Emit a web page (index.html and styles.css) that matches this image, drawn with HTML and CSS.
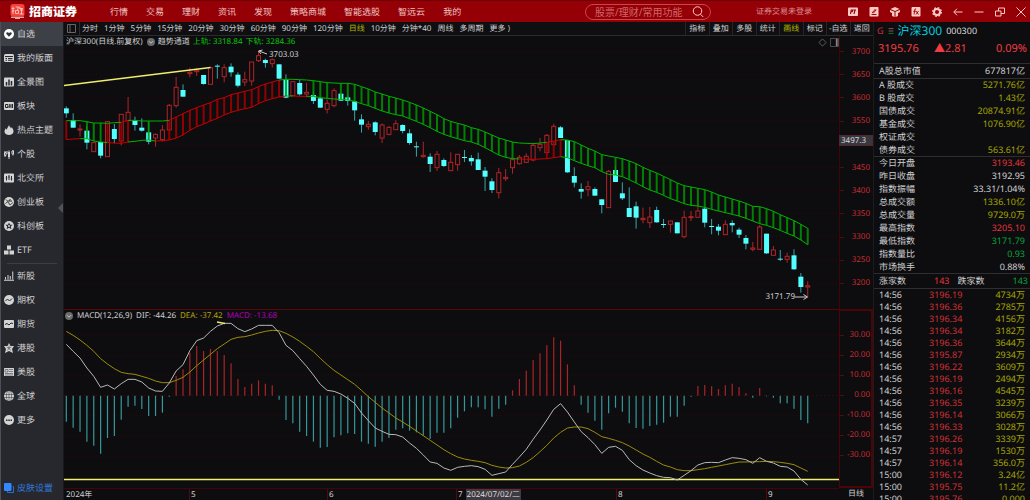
FILE: index.html
```
<!DOCTYPE html>
<html lang="zh-CN">
<head>
<meta charset="utf-8">
<title>招商证券 - 沪深300</title>
<link rel="stylesheet" href="styles.css">
</head>
<body>
<header class="topbar">
  <a class="brand" href="#">
    <svg class="brand-mark" viewBox="0 0 30 30" aria-hidden="true">
      <rect x="1" y="0" width="28" height="25" rx="5" fill="#f4413a"/>
      <path d="M6 5v15M3.500 9h5M3.500 15l5-2M11 6h6l-2 6M11 13h6v6h-6zM20 5l-1 4h7M20 12h6M23 9v11M19 20h8" stroke="#ffe4e0" stroke-width="1.500" fill="none"/>
      <path d="M2 26.500h26" stroke="#ffd8d3" stroke-width="2"/>
      <path d="M10 29h10" stroke="#ffd8d3" stroke-width="1.500"/>
    </svg>
    <span class="brand-name">招商证券</span>
  </a>
  <nav class="menu">
    <a href="#">行情</a><a href="#">交易</a><a href="#">理财</a><a href="#">资讯</a><a href="#">发现</a><a href="#">策略商城</a><a href="#">智能选股</a><a href="#">智远云</a><a href="#">我的</a>
  </nav>
  <form class="search">
    <input type="text" placeholder="股票/理财/常用功能" aria-label="搜索">
    <button type="button" aria-label="搜索按钮">
      <svg viewBox="0 0 24 24"><circle cx="11" cy="10" r="8.500"/><path d="M17 16.500l5.500 5.500"/></svg>
    </button>
  </form>
  <button class="login" type="button">证券交易未登录</button>
  <div class="tools">
    <button type="button" aria-label="行情中心"><svg viewBox="0 0 20 20"><rect x="0" y="1" width="20" height="17" rx="2" fill="#ffc9c4"/><path d="M5 14l1.500-8h3l-1 3.500H6M11 6h5M14 6l-2 8" stroke="#950006" stroke-width="2.200" fill="none"/></svg></button>
    <button type="button" aria-label="画笔"><svg viewBox="0 0 20 20"><rect x="1" y="0" width="18" height="19" rx="2" fill="#ffc9c4"/><path d="M5 15h10M6 12l7-8M8.500 12.500l6-7" stroke="#950006" stroke-width="1.900" fill="none"/></svg></button>
    <button type="button" aria-label="换肤"><svg viewBox="0 0 20 20"><path d="M10 0l9 4-9 4-9-4zM0 6l9 3.500V20l-5-2v-6L0 10zM20 6l-9 3.500V20l5-2v-6l4-2z" fill="#ffc9c4"/></svg></button>
    <button type="button" aria-label="公式"><svg viewBox="0 0 20 20"><rect x="1" y="0" width="18" height="19" rx="2" fill="#ffc9c4"/><path d="M10 4H8L6 15M4.500 8.500h5M10 8l5 7M15 8l-5 7" stroke="#950006" stroke-width="1.800" fill="none"/></svg></button>
    <button type="button" aria-label="设置"><svg viewBox="0 0 20 20"><circle cx="10" cy="10" r="6" fill="none" stroke="#ffc9c4" stroke-width="4"/><circle cx="10" cy="10" r="8.700" fill="none" stroke="#ffc9c4" stroke-width="2.500" stroke-dasharray="3.600 3.230"/></svg></button>
    <button type="button" aria-label="后退"><svg viewBox="0 0 20 20"><path d="M19 10H2M8 3.500L1.500 10 8 16.500" stroke="#ffc9c4" stroke-width="2" fill="none"/></svg></button>
    <button type="button" aria-label="最小化"><svg viewBox="0 0 20 20"><path d="M1 10h18" stroke="#ffc9c4" stroke-width="2"/></svg></button>
    <button type="button" aria-label="还原"><svg viewBox="0 0 20 20"><path d="M1 8h11v10H1zM7 8V2h12v11h-7" stroke="#ffc9c4" stroke-width="2" fill="none"/></svg></button>
    <button type="button" aria-label="关闭"><svg viewBox="0 0 20 20"><path d="M1 1l18 18M19 1L1 19" stroke="#ffc9c4" stroke-width="2"/></svg></button>
  </div>
</header>

<div class="workspace">
  <aside class="sidebar">
    <nav class="side-nav">
      <a class="active" href="#"><svg viewBox="0 0 20 20"><circle cx="10" cy="10" r="10" fill="#fff"/><path d="M10 15.500L4.800 10C3.500 7.500 6.500 5 10 8c3.500-3 6.500-.500 5.200 2z" fill="#33363d"/></svg>自选</a>
      <a href="#"><svg viewBox="0 0 20 20"><rect x="0" y="2" width="20" height="16" rx="3"/><path class="cut" d="M2 7h16M3 11h3M8 11h9M3 14.500h3M8 14.500h9"/></svg>我的版面</a>
      <a href="#"><svg viewBox="0 0 20 20"><rect x="0" y="1" width="20" height="18" rx="2"/><path class="cut wide" d="M5 17v-7M10 17V5M15 17V8"/></svg>全景图</a>
      <a href="#"><svg viewBox="0 0 20 20"><rect x="0" y="2" width="20" height="16" rx="2"/><path class="cut" d="M8 7H3v6h5v-3H6M10.500 6v8M14 6v8M10.500 10h3M17 6v8"/></svg>板块</a>
      <a href="#"><svg viewBox="0 0 20 20"><path d="M10 0c1 4 3 4 4 7 1-1 1-2 1-3 3 3 4 6 4 9 0 4-4 7-9 7s-9-3-9-7c0-3 2-5 3-7 0 2 1 3 2 3 0-4 3-5 4-9z"/></svg>热点主题</a>
      <a href="#"><svg viewBox="0 0 20 20"><path class="line" d="M2 4v3M2 13v3M1 7h3v6H1zM18 2v2M18 10v3M16 4h3v6h-3zM6 4v6"/><rect x="8" y="6" width="4" height="10"/><path class="line" d="M10 3v17"/></svg>个股</a>
      <a href="#"><svg viewBox="0 0 20 20"><rect x="0" y="1" width="20" height="18" rx="2"/><path class="cut" d="M5 6v9M10 4v10M15 6v9M3.500 10h3M8.500 8h3M13.500 12h3"/></svg>北交所</a>
      <a href="#"><svg viewBox="0 0 20 20"><circle cx="10" cy="10" r="10"/><path class="cut" d="M4 5l4 4 5-5M3 13c4-4 6-4 7 0s4 3 7-2M10 8h6"/></svg>创业板</a>
      <a href="#"><svg viewBox="0 0 20 20"><circle cx="10" cy="10" r="10"/><path d="M10 3l2 4.500h5l-3.500 3.500 1.500 5.500-5-3-5 3L6.500 11 3 7.500h5z" fill="#27282d"/><circle cx="10" cy="10" r="2"/></svg>科创板</a>
      <a href="#"><svg viewBox="0 0 20 20"><path d="M6 1h8v8H6zM0 11h9v8H0zM11 11h9v8h-9z"/></svg>ETF</a>
      <hr>
      <a href="#"><svg viewBox="0 0 20 20"><path class="line" d="M0 18.500h20M3 17v-5M8 17V8M12.500 17v-7M17.500 17V1"/></svg>新股</a>
      <a href="#"><svg viewBox="0 0 20 20"><circle cx="10" cy="10" r="10"/><path class="cut" d="M3 12l4-4 4 4 5-5"/></svg>期权</a>
      <a href="#"><svg viewBox="0 0 20 20"><rect x="0" y="2" width="20" height="16" rx="2"/><path class="cut" d="M2 11l4-2 4 3 4-4 4 1"/></svg>期货</a>
      <a href="#"><svg viewBox="0 0 20 20"><path d="M10 0l3 6 7 0-4 6 2 8-8-4-8 4 2-8-4-6h7z"/><path class="cut thin" d="M10 10V5M10 10l5-2M10 10l3 5M10 10l-3 5M10 10L5 8"/></svg>港股</a>
      <a href="#"><svg viewBox="0 0 20 20"><rect x="0" y="2" width="20" height="16" rx="1"/><path class="cut thin" d="M2 5h6v5H2zM10 5h8M10 9h8M2 13h16M2 16h16"/></svg>美股</a>
      <a href="#"><svg viewBox="0 0 20 20"><circle cx="10" cy="10" r="10"/><path class="cut thin" d="M0 7h20M0 13h20M10 0v20M7 0c-3 6-3 14 0 20M13 0c3 6 3 14 0 20"/></svg>全球</a>
      <a href="#"><svg viewBox="0 0 20 20"><circle cx="10" cy="10" r="10"/><path d="M4 9h3v3H4zM8.500 9h3v3h-3zM13 9h3v3h-3z" fill="#27282d"/></svg>更多</a>
    </nav>
    <button class="skin" type="button"><svg viewBox="0 0 20 20"><path d="M17 7h2v12H7v-3" fill="none" stroke="#2b6dcb" stroke-width="2"/><rect x="0" y="0" width="15" height="16" rx="2" fill="#3388ff"/></svg>皮肤设置</button>
    <button class="collapse" type="button" aria-label="收起侧栏"></button>
  </aside>

  <main class="chart">
    <div class="toolbar">
      <button class="panel-toggle" type="button" aria-label="切换面板"><svg viewBox="0 0 9 9"><path d="M.500 .500h8v8h-8zM3 .500v8" fill="none" stroke="#666"/></svg></button>
      <div class="periods">
        <button type="button">分时</button><button type="button">1分钟</button><button type="button">5分钟</button><button type="button">15分钟</button><button type="button">20分钟</button><button type="button">30分钟</button><button type="button">60分钟</button><button type="button">90分钟</button><button type="button">120分钟</button><button type="button" class="on">日线</button><button type="button">10分钟</button><button type="button">分钟*40</button><button type="button">周线</button><button type="button">多周期</button><button type="button">更多 &#10217;</button>
      </div>
      <div class="actions">
        <button type="button">指标</button><button type="button">叠加</button><button type="button">多股</button><button type="button">统计</button><button type="button" class="on">画线</button><button type="button">标记</button><button type="button">-自选</button><button type="button">返回</button>
      </div>
    </div>

    <div class="legend price-legend">
      <span>沪深300(日线.前复权)</span>
      <svg class="drop" viewBox="0 0 10 10"><circle cx="5" cy="5" r="5" fill="#6b6b6b"/><path d="M2.500 4L5 6.500 7.500 4" fill="none" stroke="#ddd"/></svg>
      <span>趋势通道</span>
      <span class="up-rail">上轨: 3318.84</span>
      <span class="up-rail">下轨: 3284.36</span>
      <span class="pane-icons">
        <svg viewBox="0 0 10 10"><path d="M5 1l4 4-4 4-4-4z" fill="none" stroke="#666"/></svg>
        <svg viewBox="0 0 10 10"><path d="M.500 .500h9v9h-9z" fill="none" stroke="#555"/><path d="M7.500 1v8" stroke="#888" stroke-width="2"/></svg>
      </span>
    </div>
    <div class="price-plot">
      <svg id="price" viewBox="64 48 775 261" preserveAspectRatio="none"></svg>
      <span class="tag high">3703.03</span>
      <span class="tag low">3171.79</span>
    </div>
    <div class="axis price-axis">
      <span>3700</span><span>3650</span><span>3600</span><span>3550</span><span>3500</span><span>3450</span><span>3400</span><span>3350</span><span>3300</span><span>3250</span><span>3200</span>
      <b class="cursor-price">3497.3</b>
    </div>

    <div class="legend macd-legend">
      <svg class="drop" viewBox="0 0 10 10"><circle cx="5" cy="5" r="5" fill="#6b6b6b"/><path d="M2.500 4L5 6.500 7.500 4" fill="none" stroke="#ddd"/></svg>
      <span>MACD(12,26,9)</span>
      <span>DIF: -44.26</span>
      <span class="dea">DEA: -37.42</span>
      <span class="macd">MACD: -13.68</span>
    </div>
    <div class="macd-plot">
      <svg id="macd" viewBox="64 321 775 167" preserveAspectRatio="none"></svg>
    </div>
    <div class="axis macd-axis">
      <span>30.00</span><span>20.00</span><span>10.00</span><span>0.00</span><span>-10.00</span><span>-20.00</span><span>-30.00</span>
    </div>

    <div class="time-axis">
      <span>2024年</span><span>5</span><span>6</span><span>7<b>2024/07/02/二</b></span><span>8</span><span>9</span>
    </div>
    <button class="period-label" type="button">日线</button>
  </main>

  <section class="quote">
    <div class="quote-head">
      <div class="name-row"><span class="flag">G</span><svg viewBox="0 0 10 12"><path d="M1 2h8M1 6h8" stroke="#8a6060" stroke-width="1.500"/><path d="M1 10h8" stroke="#0a8a20" stroke-width="1.500"/></svg><strong>沪深300</strong><span>000300</span></div>
      <div class="price-row"><span>3195.76</span><span>▲2.81</span><span>0.09%</span></div>
    </div>
    <table class="stats one"><tr><th scope="row">A股总市值</th><td>677817亿</td></tr></table>
    <table class="stats six">
      <tr><th scope="row">A 股成交</th><td class="y">5271.76亿</td></tr>
      <tr><th scope="row">B 股成交</th><td class="y">1.43亿</td></tr>
      <tr><th scope="row">国债成交</th><td class="y">20874.91亿</td></tr>
      <tr><th scope="row">基金成交</th><td class="y">1076.90亿</td></tr>
      <tr><th scope="row">权证成交</th><td></td></tr>
      <tr><th scope="row">债券成交</th><td class="y">563.61亿</td></tr>
    </table>
    <table class="stats nine">
      <tr><th scope="row">今日开盘</th><td class="r">3193.46</td></tr>
      <tr><th scope="row">昨日收盘</th><td>3192.95</td></tr>
      <tr><th scope="row">指数振幅</th><td>33.31/1.04%</td></tr>
      <tr><th scope="row">总成交额</th><td class="y">1336.10亿</td></tr>
      <tr><th scope="row">总成交量</th><td class="y">9729.0万</td></tr>
      <tr><th scope="row">最高指数</th><td class="r">3205.10</td></tr>
      <tr><th scope="row">最低指数</th><td class="g">3171.79</td></tr>
      <tr><th scope="row">指数量比</th><td class="g">0.93</td></tr>
      <tr><th scope="row">市场换手</th><td>0.88%</td></tr>
    </table>
    <div class="breadth">
      <div><span>涨家数</span><span class="r">143</span></div>
      <div><span>跌家数</span><span class="g">143</span></div>
    </div>
    <div class="trades">
    <table>
      <tr><td>14:56</td><td>3196.19</td><td>4734万</td></tr>
      <tr><td>14:56</td><td>3196.36</td><td>2785万</td></tr>
      <tr><td>14:56</td><td>3196.34</td><td>4156万</td></tr>
      <tr><td>14:56</td><td>3196.34</td><td>3182万</td></tr>
      <tr><td>14:56</td><td>3196.36</td><td>3644万</td></tr>
      <tr><td>14:56</td><td>3195.87</td><td>2934万</td></tr>
      <tr><td>14:56</td><td>3196.22</td><td>3609万</td></tr>
      <tr><td>14:56</td><td>3196.19</td><td>2494万</td></tr>
      <tr><td>14:56</td><td>3196.16</td><td>4545万</td></tr>
      <tr><td>14:56</td><td>3196.35</td><td>3239万</td></tr>
      <tr><td>14:56</td><td>3196.14</td><td>3066万</td></tr>
      <tr><td>14:56</td><td>3196.33</td><td>3028万</td></tr>
      <tr><td>14:57</td><td>3196.26</td><td>3339万</td></tr>
      <tr><td>14:57</td><td>3196.19</td><td>1530万</td></tr>
      <tr><td>14:57</td><td>3196.14</td><td>356.0万</td></tr>
      <tr><td>15:00</td><td>3196.12</td><td>3.24亿</td></tr>
      <tr><td>15:00</td><td>3195.75</td><td>11.2亿</td></tr>
      <tr><td>15:00</td><td>3195.76</td><td>0.000</td></tr>
    </table>
    </div>
  </section>
</div>
<script src="chart.js"></script>
</body>
</html>
```
FILE: styles.css
```
* { box-sizing: border-box; }

body {
  margin: 0;
  height: 100vh;
  display: flex;
  flex-direction: column;
  overflow: hidden;
  background: #0d0d10;
  color: #d0d0d0;
  font: 9px/12px "Noto Sans", "Noto Sans CJK SC", sans-serif;
  text-rendering: geometricPrecision;
}

a { color: inherit; text-decoration: none; }
button {
  margin: 0;
  padding: 0;
  border: 0;
  background: none;
  color: inherit;
  font: inherit;
  text-rendering: inherit;
  white-space: nowrap;
}
svg { display: block; }
table { border-collapse: collapse; width: 100%; }
th, td { padding: 0; font-weight: 400; }

.r { color: #e23438; }
.g { color: #08a038; }
.y { color: #a5a500; }

/* top bar */
.topbar {
  flex: none;
  height: 22px;
  display: flex;
  align-items: center;
  padding: 0 4px 0 10px;
  background: #950006;
  border-top: 1px solid #6d0004;
  color: #f0c4c0;
}
.brand { display: flex; align-items: center; gap: 4px; width: 100px; }
.brand-mark { width: 15px; height: 15px; }
.brand-name { color: #fff; font-size: 12px; font-weight: 900; white-space: nowrap; }
.menu { display: flex; gap: 18px; white-space: nowrap; }
.search {
  display: flex;
  align-items: center;
  width: 126px;
  height: 16px;
  margin-left: auto;
  padding: 0 6px 0 9px;
  border: 1px solid #c9474a;
  border-radius: 8px;
}
.search input {
  flex: 1;
  min-width: 0;
  padding: 0;
  border: 0;
  outline: 0;
  background: none;
  color: #fff;
  font: inherit;
  font-size: 10px;
}
.search input::placeholder { color: #d0666a; opacity: 1; }
.search svg { width: 12px; height: 12px; fill: none; stroke: #ffc9c4; stroke-width: 2; }
.login { margin-left: 45px; font-size: 8px; color: #dc8f8f; }
.tools { display: flex; gap: 11px; margin-left: 36px; }
.tools svg { width: 10px; height: 10px; }

.workspace {
  flex: 1;
  min-height: 0;
  display: grid;
  grid-template-columns: 64px minmax(0, 1fr) 157px;
}

/* sidebar */
.sidebar {
  position: relative;
  display: flex;
  flex-direction: column;
  justify-content: space-between;
  background: #27282d;
  border-left: 1px solid #4c5054;
  border-right: 1px solid #1a1a1e;
}
.side-nav a, .skin { display: flex; align-items: center; gap: 3px; height: 24px; padding-left: 3px; }
.side-nav a.active { background: #3d4047; }
.side-nav svg { width: 10px; height: 10px; fill: #d4d4d4; }
.side-nav .cut { fill: none; stroke: #27282d; stroke-width: 2; }
.side-nav .thin { stroke-width: 1; }
.side-nav .wide { stroke-width: 3; }
.side-nav .line { fill: none; stroke: #d4d4d4; stroke-width: 2; }
.side-nav hr { height: 1px; margin: 1px 6px 0; border: 0; background: #3d3e43; }
.skin { color: #3078dc; }
.skin svg { width: 10px; height: 10px; }
.collapse {
  position: absolute;
  right: 0;
  top: 181px;
  border: solid transparent;
  border-width: 5px 5px 5px 0;
  border-right-color: #505258;
}

/* chart */
.chart {
  display: grid;
  min-height: 0;
  grid-template-columns: minmax(0, 1fr) 34px;
  grid-template-rows: 14px 12px minmax(0, 261fr) 12px minmax(0, 167fr) 12px;
  font-size: 8px;
}
.toolbar {
  grid-column: 1 / -1;
  display: flex;
  align-items: stretch;
  border-bottom: 1px solid #2b2b2e;
  background: #0f0f12;
}
.panel-toggle { width: 16px; padding-left: 3px; border-right: 1px solid #2b2b2e; }
.panel-toggle svg { width: 9px; height: 9px; }
.periods { display: flex; gap: 6px; margin-left: 2px; flex: 1; min-width: 0; overflow: hidden; }
.actions { display: grid; grid-template-columns: repeat(8, 1fr); width: 188px; }
.actions button { border-left: 1px solid #26262a; }
.toolbar .on { color: #b5b500; }

.legend { display: flex; align-items: center; gap: 4px; white-space: nowrap; min-width: 0; }
.price-legend { grid-column: 1; padding-left: 2px; gap: 3px; }
.drop { width: 8px; height: 8px; margin-left: 1px; }
.up-rail { color: #08c408; }
.pane-icons { display: flex; gap: 3px; margin-left: auto; }
.pane-icons svg { width: 9px; height: 9px; }

.price-plot, .macd-plot { position: relative; grid-column: 1; min-height: 0; }
.price-plot > svg, .macd-plot > svg { width: 100%; height: 100%; }
.tag { position: absolute; line-height: 10px; }
.tag.high { left: 205px; top: 2px; }
.tag.low { right: 44px; bottom: 7px; }

.axis { position: relative; display: flex; flex-direction: column; color: #c42c30; }
.axis span {
  flex: 1;
  display: flex;
  align-items: center;
  justify-content: space-between;
}
.axis span::before { content: ""; width: 4px; height: 1px; background: #5d0508; }
.price-axis {
  grid-column: 2;
  grid-row: 2 / 4;
  padding: 4px 3px 14px 0;
  border-left: 1px solid #3f0508;
}
.cursor-price {
  position: absolute;
  left: -1px;
  right: 0;
  top: 99px;
  padding-left: 1px;
  border: 1px solid #55262b;
  background: #38363f;
  color: #d8d8d8;
  font-weight: 400;
  line-height: 9px;
}
.macd-legend { grid-column: 1; border-top: 1px solid #5a0608; }
.dea { color: #b5a50a; }
.macd { color: #b000b8; }
.macd-axis {
  grid-column: 2;
  grid-row: 4 / 6;
  padding: 14px 1px 21px 0;
  border: 2px solid #4c0407;
  border-left-width: 1px;
}
.time-axis {
  display: grid;
  grid-template-columns: 125fr 138fr 129fr 160fr 150fr 73fr;
  border-top: 1px solid #3f0508;
  line-height: 11px;
  white-space: nowrap;
}
.time-axis span { padding-left: 1px; border-left: 1px solid #5a0608; }
.time-axis span:first-child { border-left-color: transparent; }
.time-axis b { display: inline-block; margin-left: 3px; padding: 0 1px; background: #3d3a42; font-weight: 400; color: #ddd; }
.period-label { line-height: 12px; }

/* quote panel */
.quote {
  display: flex;
  flex-direction: column;
  min-height: 0;
  overflow: hidden;
  border-left: 1px solid #1c1c20;
}
.quote-head { padding: 0 3px 5px; color: #f03c40; font-size: 11px; }
.name-row { display: flex; align-items: center; gap: 4px; height: 18px; }
.name-row svg { width: 6px; height: 8px; }
.name-row strong { color: #00c8d8; font-size: 12px; font-weight: 400; }
.name-row span { color: #d8d8d8; font-size: 9px; }
.name-row .flag { color: #c83034; }
.price-row {
  display: grid;
  grid-template-columns: 56px 1fr auto;
  height: 18px;
  line-height: 18px;
  padding-left: 1px;
}
.stats, .breadth { border-top: 1px solid #2e2e31; }
.stats th { text-align: left; padding-left: 5px; }
.stats td { text-align: right; padding-right: 5px; }
.stats.one { height: 15px; }
.stats.six { height: 78px; }
.stats.nine { height: 117px; }
.breadth {
  display: flex;
  align-items: center;
  gap: 8px;
  height: 16px;
  padding: 0 2px 0 5px;
  border-bottom: 1px solid #2e2e31;
}
.breadth div { display: flex; justify-content: space-between; flex: 1; }
.trades { flex: 1; min-height: 0; overflow: hidden; }
.trades table { table-layout: fixed; }
.trades tr { height: 12px; }
.trades td { padding-left: 5px; }
.trades td:nth-child(2) { padding-left: 3px; color: #cf3034; }
.trades td:nth-child(3) { padding-right: 5px; text-align: right; color: #a5a500; }
```
FILE: chart.js
```
// Vertical positions are kept in thirds of a unit; each run has its own base line.
const run = (base, values) => values.map(v => base + v / 3);
const FIRST = 66.3;
const STEP = 6.865;
const x = i => FIRST + STEP * i;

const RED = '#b02428', CYAN = '#54ffff', GREEN = '#00b400', BAND_RED = '#c80000';

// direction, high, body top, body bottom, low
const candleRuns = [
  [40, `D199,205,220,233 D220,240,263,263 U253,267,268,290 D258,272,308,328 U305,308,335,335 D305,306,347,355
   U243,245,350,350 D252,267,297,310 U223,223,303,316 U171,217,242,242 D230,242,255,272 D235,263,272,275
   D245,277,305,313 U280,283,294,320 U255,270,299,305 U192,196,270,270 U111,142,197,203 D133,150,170,170
   U83,97,101,112 U85,91,95,108 D105,105,132,134 U80,83,133,133 D73,77,80,116 U73,83,110,127 D70,80,97,110
   D97,104,137,142 U95,119,126,138 U66,66,123,137 U33,47,62,66 D56,60,69,83 U55,59,71,83 D73,73,116,116
   D103,119,173,175 U125,125,167,167 D120,129,163,167 U128,157,162,172`],
  [60, `D95,105,123,132 D112,115,143,143 U118,130,148,160 U85,92,137,142 D100,101,122,123 D106,112,123,137
   D123,124,151,182 D163,178,194,218 U183,193,200,209 D184,187,216,226 U190,195,234,249 U198,202,223,226
   U181,191,209,209 D193,195,213,220 D208,220,249,254 D245,259,261,290 U245,286,290,293 D280,290,312,336
   U273,283,323,333 D295,300,318,321 U277,307,332,332 U283,283,314,332 D270,291,293,306 D285,294,304,317
   D278,298,330,330 D321,332,350,393 D355,364,390,399 U324,338,398,415 U327,352,356,363 U295,299,323,341
   U285,292,311,314 U280,289,307,308 U250,256,300,304 U234,253,263,274 U222,226,278,278 U191,199,254,254
   D198,202,234,234`],
  [110, `D90,90,187,188 D172,198,218,232 D220,237,245,266 U213,230,239,259 D232,237,257,257 D268,268,285,310
   U180,184,293,293 D168,180,216,216 D217,250,265,270 D232,294,321,321 D275,289,323,356 U293,325,329,340
   U291,321,338,354 D290,300,337,338 D327,342,344,354 U332,333,343,368 D337,337,370,370 U302,322,380,385
   U303,320,323,333 U285,303,322,322 D290,296,338,352 D327,348,350,373 D342,350,362,376 U331,343,374,374
   D331,339,346,367 D353,359,374,384 D375,384,401,418 U396,414,418,424 U345,351,418,418 D371,371,430,432
   U408,420,436,436 D420,446,448,453 U428,439,448,458 D418,436,478,479 D489,500,531,548 U514,527,531,562`]
];
const candles = candleRuns.flatMap(([base, text]) =>
  text.split(/\s+/).map(c => [c[0], ...run(base, c.slice(1).split(',').map(Number))]));

const upper = [
  ...run(40, [242,242,242,245,249,249,250,248,247,241,241,243,243,243,243,241,231,221,211,203,195,188,178,173,164,159,154,149,140,132,126,120,118,118,119,120]),
  ...run(60, [62,65,68,69,70,70,73,80,87,96,102,109,114,120,127,135,144,154,164,176,184,190,195,203,208,216,225,234,240,246,249,250,251,249,247,243,239]),
  ...run(110, [90,95,105,115,123,134,138,142,146,153,161,172,181,189,199,209,219,227,231,235,239,246,255,261,267,273,280,289,290,296,304,314,323,332,343,355])
];
const lower = [
  ...run(40, [299,297,296,296,303,306,308,309,310,306,304,301,300,303,302,300,294,285,271,260,252,243,235,225,217,211,206,202,191,182,176,171,168,168,169,169]),
  ...run(60, [109,113,115,117,118,120,124,131,137,145,153,159,164,168,176,184,193,203,214,223,230,236,242,246,253,263,274,285,292,296,297,298,298,297,296,293,290]),
  ...run(110, [143,152,160,167,173,185,193,195,200,209,219,230,240,247,256,266,273,281,286,288,292,298,303,308,313,318,325,333,341,346,353,361,370,378,390,404])
];
const hist = run(305, [350,368,380,410,422,446,399,393,344,305,302,312,333,333,323,275,213,193,143,123,138,132,138,150,175,222,246,236,226,236,241,284,345,355,380,393,410,428,426,397,391,385,387,410,416,425,410,399,374,370,377,382,392,402,383,383,370,338,319,307,307,313,335,311,299,256,222,197,165,145,121,97,107,178,241,299,323,347,374,325,308,320,355,369,371,363,359,353,335,335,302,275,243,240,244,252,241,236,246,264,278,249,274,278,295,295,311,345,355]);
const dif = run(305, [118,139,159,189,214,247,240,252,236,223,223,231,249,258,259,234,198,179,137,107,99,79,63,55,55,71,80,72,61,61,61,83,121,137,161,184,210,238,256,259,267,280,295,324,347,369,379,388,389,396,414,430,450,471,475,489,496,487,484,482,485,493,511,506,501,478,456,433,403,375,345,313,296,321,351,380,398,419,445,427,424,436,464,482,495,504,512,517,518,525,511,497,480,473,472,473,465,458,460,464,475,458,469,474,484,486,498,523,540]);
const dea = run(305, [79,91,105,121,139,161,177,191,202,206,208,214,220,228,233,233,226,217,201,182,165,148,131,117,103,97,95,90,84,79,76,77,85,96,109,124,140,160,179,196,210,224,238,256,275,292,309,324,339,351,364,378,392,406,420,434,446,456,462,466,469,473,481,486,489,488,483,472,458,440,421,399,382,369,366,366,371,382,395,400,406,413,423,435,447,457,469,480,486,494,497,497,494,491,487,483,479,475,471,471,470,470,469,470,472,475,479,489,499]);

const line = (x1, y1, x2, y2, color, width = 1, extra = '') =>
  `<line x1="${x1}" y1="${y1}" x2="${x2}" y2="${y2}" stroke="${color}" stroke-width="${width}" ${extra}/>`;
const poly = (values, from, to, color) =>
  `<polyline fill="none" stroke="${color}" points="${values.slice(from, to + 1).map((v, k) => `${x(from + k)},${v}`).join(' ')}"/>`;

function drawPrice() {
  let out = '';
  for (let k = 0; k < 11; k++) {
    const y = Math.round(51 + k * 23.15) + 0.5;
    out += line(64, y, 839, y, '#33050a', 1, 'stroke-dasharray="1 3"');
  }
  candles.forEach(([dir, high, top, bottom, low], i) => {
    const cx = x(i);
    const h = Math.max(bottom - top, 1);
    if (dir === 'D') {
      out += line(cx, high, cx, low, '#39a5a8', 1);
      out += `<rect x="${cx - 2.5}" y="${top}" width="5" height="${h}" fill="${CYAN}"/>`;
    } else {
      out += line(cx, high, cx, top, RED) + line(cx, bottom, cx, low, RED);
      out += `<rect x="${cx - 2}" y="${top}" width="4" height="${h}" fill="none" stroke="${RED}"/>`;
    }
  });
  const redBars = i => [0, 6, 8, 9, 70, 71, 72].includes(i) || (i >= 15 && i <= 31);
  const noBar = i => [1, 2, 7, 10, 11, 13, 14, 33, 34, 35, 39, 66, 67, 68, 69, 79].includes(i);
  upper.forEach((top, i) => {
    if (!noBar(i)) out += line(x(i), top, x(i), lower[i], redBars(i) ? '#a80000' : '#009600', 2, 'opacity=".85"');
  });
  [['g', 0, 8], ['r', 8, 9], ['g', 9, 15], ['r', 15, 31], ['g', 31, 70], ['r', 70, 72], ['g', 72, 108]]
    .forEach(([c, a, b]) => { out += poly(upper, a, b, c === 'g' ? GREEN : BAND_RED); });
  [['r', 0, 2], ['g', 2, 6], ['r', 6, 9], ['g', 9, 13], ['r', 13, 32], ['g', 32, 33], ['r', 33, 35], ['g', 35, 66], ['r', 66, 72], ['g', 72, 108]]
    .forEach(([c, a, b]) => { out += poly(lower, a, b, c === 'g' ? GREEN : BAND_RED); });
  out += line(64, 85.5, 210.5, 67.5, '#eded6e', 1.5);
  out += '<path d="M267 54L259 51M262.500 50l-4 1 2.500 3M795 297h12M803.500 294.500l4 2.500-4 2.500" fill="none" stroke="#ccc"/>';
  document.getElementById('price').innerHTML = out;
}

function drawMacd() {
  let out = '';
  const zero = 395.7;
  for (let k = 0; k < 7; k++) {
    const y = Math.round(335 + k * 20.1) + 0.5;
    out += line(64, y, 839, y, k === 3 ? '#4a0509' : '#33050a', 1, 'stroke-dasharray="1 3"');
  }
  hist.forEach((end, i) => { out += line(x(i), zero, x(i), end, end < zero ? '#a82428' : '#35989a', 1.2); });
  out += line(64, 479.5, 839, 479.5, '#f0f070', 1.5);
  out += poly(dea, 0, 108, '#9c8c0a') + poly(dif, 0, 108, '#b8b8b8');
  out += line(217, 322, 225, 323.5, '#eded6e', 1.5);
  document.getElementById('macd').innerHTML = out;
}

drawPrice();
drawMacd();
```
